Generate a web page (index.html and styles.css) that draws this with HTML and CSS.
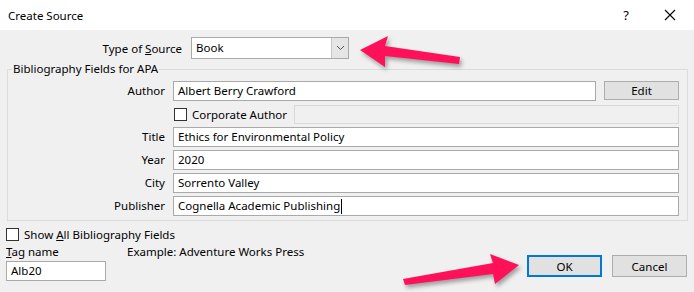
FILE: index.html
```html
<!DOCTYPE html>
<html lang="en">
<head>
  <meta charset="UTF-8" />
  <title>Create Source</title>
  <link rel="stylesheet" href="styles.css">
</head>
<body>
  <div class="dialog">
    <div class="titlebar">
      <span class="title">Create Source</span>
      <span class="help">?</span>
      <span class="close">
        <svg width="12" height="12" viewBox="0 0 12 12"><path d="M1 1 L11 11 M11 1 L1 11" stroke="#000" stroke-width="1.1" fill="none"/></svg>
      </span>
    </div>

    <div class="content">
      <!-- tipo de fuente -->
      <div class="type-row">
        <span class="type-label">Type of <u>S</u>ource</span>
        <div class="select">
          <span class="select-value">Book</span>
          <span class="select-btn">
            <svg width="9" height="6" viewBox="0 0 9 6"><path d="M1 1 L4.5 4.5 L8 1" stroke="#555" stroke-width="1" fill="none"/></svg>
          </span>
        </div>
      </div>

      <fieldset class="group">
        <legend>Bibliography Fields for APA</legend>
        <div class="fields">
          <label class="field-label">Author</label>
          <div class="author-row">
            <div class="textbox grow">Albert Berry Crawford</div>
            <button class="btn edit-btn">Edit</button>
          </div>

          <span></span>
          <div class="corp-row">
            <span class="check"></span>
            <span class="corp-text">Corporate Author</span>
            <div class="textbox disabled grow"></div>
          </div>

          <label class="field-label">Title</label>
          <div class="textbox">Ethics for Environmental Policy</div>

          <label class="field-label">Year</label>
          <div class="textbox">2020</div>

          <label class="field-label">City</label>
          <div class="textbox">Sorrento Valley</div>

          <label class="field-label">Publisher</label>
          <div class="textbox">Cognella Academic Publishing<span class="caret"></span></div>
        </div>
      </fieldset>

      <div class="show-all">
        <span class="check"></span>
        <span>Show <u>A</u>ll Bibliography Fields</span>
      </div>

      <div class="footer">
        <div class="tag">
          <div class="tag-label"><u>T</u>ag name</div>
          <div class="textbox tag-input">Alb20</div>
        </div>
        <div class="example">Example: Adventure Works Press</div>
        <div class="buttons">
          <button class="btn ok-btn">OK</button>
          <button class="btn">Cancel</button>
        </div>
      </div>

      <!-- flechas de anotación -->
      <svg class="arrow arrow-top" width="110" height="42" viewBox="0 0 110 42">
        <polygon points="2,16 30,2 27,12 102,23 101,30 27,22 27,33" fill="#ff1159"/>
      </svg>
      <svg class="arrow arrow-ok" width="124" height="44" viewBox="0 0 124 44">
        <polygon points="119,15 90,4 93,13 3,29 5,35 93,24 95,34" fill="#ff1159"/>
      </svg>
    </div>
  </div>
</body>
</html>
```

FILE: styles.css
```css
body {
  margin: 0;
  padding: 0;
  font-family: "Noto Sans", "Segoe UI", sans-serif;
  font-size: 11.5px;
  color: #000;
  background-color: #f0f0f0;
}
.dialog {
  width: 694px;
  height: 292px;
  overflow: hidden;
}
.titlebar {
  height: 30px;
  display: flex;
  align-items: center;
  background-color: #fff;
  padding-left: 8px;
}
.title {
  flex: 1;
}
.help {
  font-size: 13px;
  margin-right: 35px;
}
.close {
  display: flex;
  margin-right: 18px;
}
.content {
  position: relative;
  height: 262px;
  background-color: #f0f0f0;
}
.type-row {
  display: flex;
  align-items: center;
  padding-top: 7px;
}
.type-label {
  width: 182px;
  text-align: right;
  margin-right: 9px;
}
.select {
  width: 158px;
  height: 22px;
  box-sizing: border-box;
  border: 1px solid #a9a9a9;
  background-color: #fff;
  display: flex;
  align-items: stretch;
}
.select-value {
  flex: 1;
  padding-left: 4px;
  line-height: 20px;
}
.select-btn {
  width: 16px;
  background-color: #e5e5e5;
  border-left: 1px solid #c5c5c5;
  display: flex;
  align-items: center;
  justify-content: center;
}
.group {
  margin: 2px 6px 0 7px;
  padding: 4px 8px 4px 0;
  border: 1px solid #dcdcdc;
  min-inline-size: 0;
}
.group legend {
  padding: 0 1px;
  margin-left: 4px;
  line-height: 16px;
}
.fields {
  display: grid;
  grid-template-columns: 157px 1fr;
  column-gap: 8px;
  row-gap: 3px;
  grid-auto-rows: 20px;
}
.field-label {
  text-align: right;
  line-height: 20px;
}
.textbox {
  height: 20px;
  box-sizing: border-box;
  border: 1px solid #a9a9a9;
  background-color: #fff;
  padding-left: 4px;
  line-height: 18px;
  white-space: nowrap;
}
.textbox.disabled {
  height: 19px;
  border-color: #d9d9d9;
  background-color: #f0f0f0;
}
.grow {
  flex: 1;
}
.caret {
  display: inline-block;
  width: 1px;
  height: 15px;
  background-color: #000;
  vertical-align: middle;
  margin-left: 1px;
}
.author-row {
  display: flex;
  gap: 8px;
}
.corp-row {
  display: flex;
  align-items: center;
}
.corp-text {
  margin-left: 5px;
  width: 102px;
}
.check {
  display: inline-block;
  width: 13px;
  height: 13px;
  box-sizing: border-box;
  border: 1px solid #333;
  background-color: #fff;
  margin-left: 1px;
}
.btn {
  font-family: inherit;
  font-size: 11.5px;
  color: #000;
  background-color: #e1e1e1;
  border: 1px solid #adadad;
  height: 20px;
  width: 75px;
  padding: 0;
}
.edit-btn {
  height: 19px;
}
.show-all {
  display: flex;
  align-items: center;
  gap: 5px;
  padding-left: 6px;
  margin-top: 5px;
  height: 16px;
}
.show-all .check {
  margin-left: 0;
}
.footer {
  display: flex;
  align-items: flex-start;
  padding: 2px 7px 0 6px;
}
.tag {
  width: 121px;
}
.tag-label {
  line-height: 16px;
}
.tag-input {
  width: 100px;
  margin-top: 1px;
}
.example {
  flex: 1;
  line-height: 16px;
}
.buttons {
  display: flex;
  gap: 10px;
  margin-top: 11px;
}
.buttons .btn {
  height: 22px;
}
.ok-btn {
  border: 2px solid #0078d7;
}
.arrow {
  position: absolute;
  filter: drop-shadow(2px 3px 2px rgba(0, 0, 0, 0.35));
}
.arrow-top {
  left: 358px;
  top: 4px;
}
.arrow-ok {
  left: 400px;
  top: 220px;
}
```
